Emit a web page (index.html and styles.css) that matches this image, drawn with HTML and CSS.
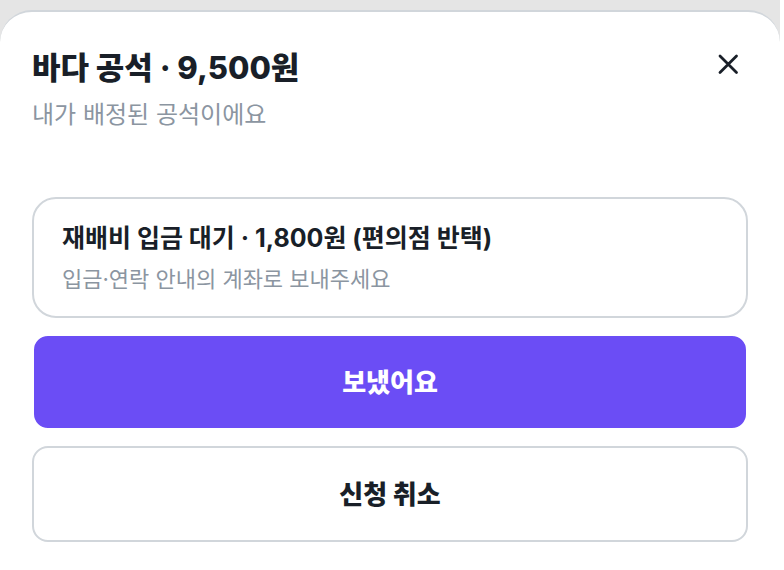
FILE: index.html
```html
<!DOCTYPE html>
<html lang="ko">
<head>
  <meta charset="UTF-8">
  <meta name="viewport" content="width=device-width, initial-scale=1">
  <title>바다 공석</title>
  <link rel="stylesheet" href="styles.css">
</head>
<body>
  <main class="sheet">
    <header class="sheet-header">
      <div>
        <h1>바다 공석 · 9,500원</h1>
        <p class="subtitle">내가 배정된 공석이에요</p>
      </div>
      <button type="button" class="close-btn" aria-label="닫기">
        <svg width="24" height="24" viewBox="0 0 24 24" fill="none" stroke="currentColor" stroke-width="2.8" stroke-linecap="round">
          <path d="M4 4l16.500 16.500M20.500 4L4 20.500"/>
        </svg>
      </button>
    </header>

    <section class="notice">
      <h2>재배비 입금 대기 · 1,800원 (편의점 반택)</h2>
      <p>입금·연락 안내의 계좌로 보내주세요</p>
    </section>

    <div class="actions">
      <button type="button" class="btn btn-primary">보냈어요</button>
      <button type="button" class="btn btn-outline">신청 취소</button>
    </div>
  </main>
</body>
</html>
```
FILE: styles.css
```css
* {
  box-sizing: border-box;
}
body {
  margin: 0;
  padding-top: 10px;
  background: #e5e5e5;
  border-right: 4px solid #fff;
  color: #191f28;
  font-family: Inter, "Noto Sans CJK KR", sans-serif;
}
.sheet {
  min-height: calc(100vh - 10px);
  padding: 36px 32px 28px;
  background: #fff;
  border-top: 2px solid #d1d6db;
  border-radius: 32px 32px 0 0;
}
.sheet-header {
  display: flex;
  justify-content: space-between;
  align-items: flex-start;
  margin-bottom: 64px;
}
h1, h2, p {
  margin: 0;
}
h1 {
  font-size: 31px;
  font-weight: 800;
  line-height: 40px;
}
.subtitle {
  margin-top: 9px;
  font-size: 24px;
  line-height: 36px;
  color: #8b95a1;
}
.close-btn {
  display: flex;
  padding: 4px 8px;
  border: 0;
  background: none;
  color: inherit;
  cursor: pointer;
}
.notice {
  padding: 21px 28px;
  border: 2px solid #d1d6db;
  border-radius: 24px;
}
.notice h2 {
  font-size: 25px;
  line-height: 36px;
}
.notice p {
  margin-top: 7px;
  font-size: 22px;
  line-height: 32px;
  color: #8b95a1;
}
.actions {
  display: flex;
  flex-direction: column;
  gap: 16px;
  margin-top: 16px;
}
.btn {
  height: 96px;
  padding: 0 16px 4px;
  border: 2px solid #d1d6db;
  border-radius: 16px;
  font-family: inherit;
  font-size: 26px;
  font-weight: 800;
  cursor: pointer;
}
.btn-primary {
  background: #6b4df5;
  border-color: #fff;
  color: #fff;
}
.btn-outline {
  background: #fff;
  color: inherit;
}
```
